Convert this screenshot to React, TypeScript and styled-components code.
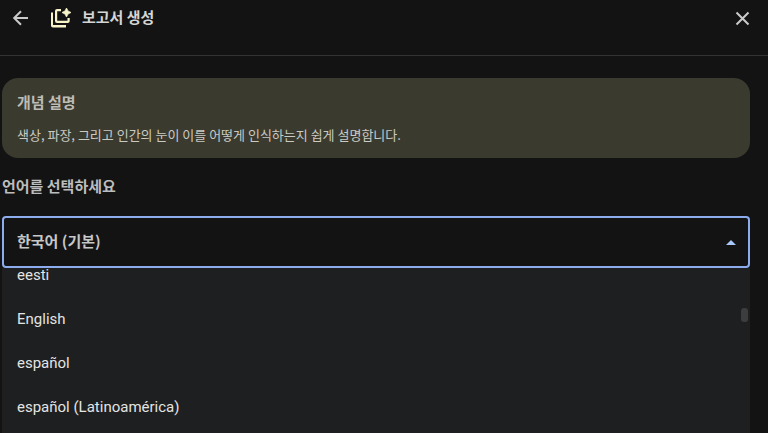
import { useLayoutEffect, useRef } from "react";
import styled, { createGlobalStyle } from "styled-components";

const GlobalStyle = createGlobalStyle`
  *, *::before, *::after { box-sizing: border-box; }
  body {
    margin: 0;
    background: #131314;
    color: #c9cac9;
    font-family: Roboto, "Noto Sans CJK KR", sans-serif;
  }
`;

const korean = `"Noto Sans CJK KR", sans-serif`;

const Dialog = styled.main`
  display: flex;
  flex-direction: column;
  height: 100vh;
  overflow: hidden;
`;

const Header = styled.header`
  display: flex;
  align-items: flex-start;
  flex: none;
  height: 56px;
  padding: 6px 14px 0 8px;
  border-bottom: 1px solid #323334;
`;

const IconButton = styled.button`
  display: flex;
  align-items: center;
  justify-content: center;
  width: 24px;
  height: 24px;
  padding: 0;
  border: 0;
  background: none;
  color: #c9cac9;
  cursor: pointer;
`;

const ReportIcon = styled.svg`
  width: 24px;
  height: 24px;
  margin-left: 16px;
  fill: #f8f3c9;
`;

const Title = styled.h1`
  flex: 1;
  margin: 0 0 0 10px;
  font: 700 15px/22px ${korean};
  color: #d4d5d4;
`;

const Content = styled.div`
  display: flex;
  flex-direction: column;
  flex: 1;
  min-height: 0;
  padding: 22px 18px 0 2px;
`;

const Card = styled.section`
  flex: none;
  padding: 14px 15px 12px;
  border-radius: 16px;
  background: #3b3a2f;
`;

const CardTitle = styled.h2`
  margin: 0 0 12px;
  font: 700 15px/20px ${korean};
  color: #bdbdb6;
`;

const CardText = styled.p`
  margin: 0;
  font: 400 13px/22px ${korean};
  color: #cacac3;
`;

const FieldLabel = styled.label`
  flex: none;
  margin: 17px 0 19px;
  font: 700 15px/22px ${korean};
  color: #bcbdbc;
`;

const SelectBox = styled.div`
  display: grid;
  flex: none;
  align-items: center;
  height: 52px;
  border: 2px solid #8cacee;
  border-radius: 4px;
  color: #a8c7fa;

  > * { grid-area: 1 / 1; }
`;

const Select = styled.select`
  appearance: none;
  width: 100%;
  height: 48px;
  padding: 0 40px 2px 13px;
  border: 0;
  outline: 0;
  background: transparent;
  color: #c6c7c6;
  font: 700 15px/22px ${korean};
`;

const Caret = styled.svg`
  justify-self: end;
  width: 10px;
  height: 5px;
  margin-right: 12px;
  pointer-events: none;
  fill: currentColor;
`;

const Menu = styled.div`
  display: flex;
  flex: 1;
  min-height: 0;
  background: #1e1f20;
`;

const Options = styled.ul`
  flex: 1;
  margin: 0;
  padding: 0 0 24px;
  overflow-y: auto;
  scrollbar-width: none;
  list-style: none;
`;

const Option = styled.li`
  padding: 0 15px;
  font-size: 15px;
  line-height: 44px;
  color: #e3e4e3;
  cursor: pointer;
`;

const ScrollTrack = styled.div`
  width: 9px;
  padding: 40px 2px 0 0;
`;

const ScrollThumb = styled.div`
  height: 14px;
  border-radius: 3px;
  background: #3c3d3f;
`;

const languages = ["eesti", "English", "español", "español (Latinoamérica)"];

export default function App() {
  const list = useRef<HTMLUListElement>(null);

  useLayoutEffect(() => {
    if (list.current) list.current.scrollTop = 15;
  }, []);

  return (
    <>
      <GlobalStyle />
      <Dialog>
        <Header>
          <IconButton type="button" aria-label="뒤로">
            <svg width="24" height="24" viewBox="0 0 24 24" fill="none" stroke="currentColor" strokeWidth="2">
              <path d="M20 12H6.500M13 5.200 6.200 12l6.800 6.800" />
            </svg>
          </IconButton>
          <ReportIcon viewBox="0 0 24 24" aria-hidden="true">
            <path d="M3 6.500h2V19h13v2.500H5q-2 0-2-2zM9 3h4v2.200H9.200v9.600h10.300V12h2.200v3q0 2-2 2H9q-2 0-2-2V5q0-2 2-2z" />
            <path d="m18.500 2 1.500 3 3 1.500-3 1.500-1.500 3-1.500-3-3-1.500 3-1.500z" stroke="#f8f3c9" strokeWidth=".8" />
          </ReportIcon>
          <Title>보고서 생성</Title>
          <IconButton type="button" aria-label="닫기">
            <svg width="24" height="24" viewBox="0 0 24 24" fill="none" stroke="currentColor" strokeWidth="2">
              <path d="m6.500 6.500 12 12M18.500 6.500l-12 12" />
            </svg>
          </IconButton>
        </Header>
        <Content>
          <Card>
            <CardTitle>개념 설명</CardTitle>
            <CardText>색상, 파장, 그리고 인간의 눈이 이를 어떻게 인식하는지 쉽게 설명합니다.</CardText>
          </Card>
          <FieldLabel htmlFor="language">언어를 선택하세요</FieldLabel>
          <SelectBox>
            <Select id="language" defaultValue="ko">
              <option value="ko">한국어 (기본)</option>
            </Select>
            <Caret viewBox="0 0 10 5" aria-hidden="true">
              <path d="M0 5 5 0l5 5z" />
            </Caret>
          </SelectBox>
          <Menu>
            <Options ref={list} role="listbox" aria-label="언어">
              {languages.map((name) => (
                <Option key={name} role="option" aria-selected={false}>{name}</Option>
              ))}
            </Options>
            <ScrollTrack>
              <ScrollThumb />
            </ScrollTrack>
          </Menu>
        </Content>
      </Dialog>
    </>
  );
}
